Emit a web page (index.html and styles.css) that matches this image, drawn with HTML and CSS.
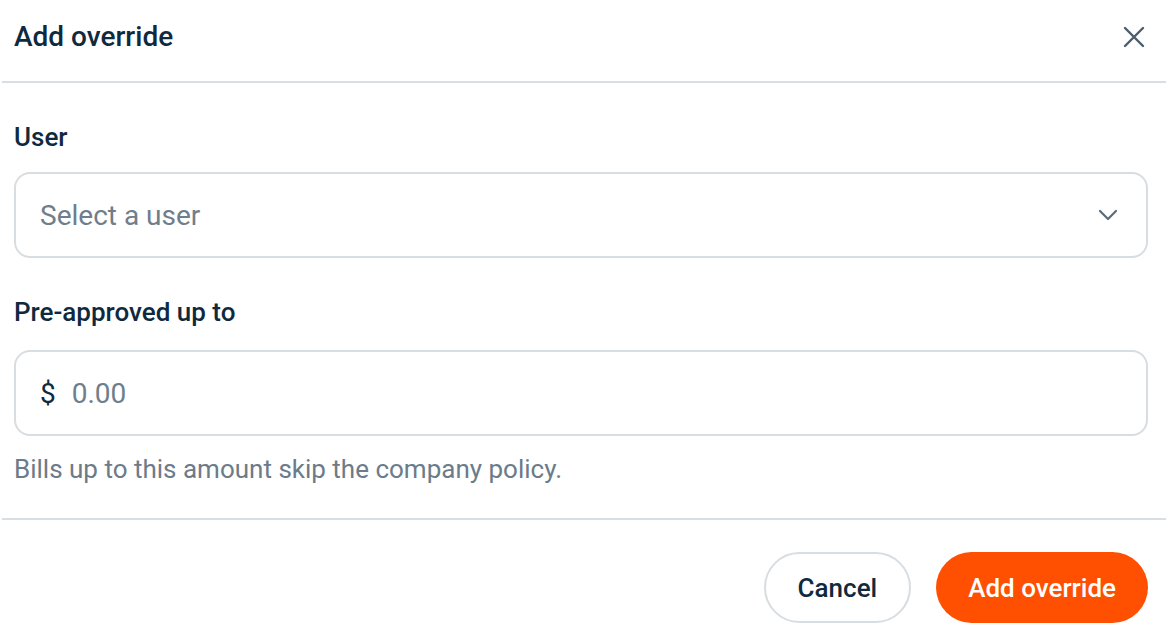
FILE: index.html
```html
<!DOCTYPE html>
<html lang="en">
<head>
<meta charset="utf-8">
<title>Add override</title>
<link rel="stylesheet" href="styles.css">
</head>
<body>
<div class="dialog">
  <header class="dialog-header">
    <h1 class="dialog-title">Add override</h1>
    <button class="close-btn" aria-label="Close">
      <svg width="22" height="22" viewBox="0 0 22 22"><path d="M2 2 L20 20 M20 2 L2 20" stroke="#4b5d6d" stroke-width="2.4" stroke-linecap="round" fill="none"/></svg>
    </button>
  </header>
  <section class="dialog-body">
    <div class="field">
      <label class="field-label">User</label>
      <div class="control select">
        <span class="placeholder">Select a user</span>
        <svg class="chevron" width="20" height="12" viewBox="0 0 20 12"><path d="M2 2 L10 10 L18 2" stroke="#5b6b7a" stroke-width="2.2" stroke-linecap="round" stroke-linejoin="round" fill="none"/></svg>
      </div>
    </div>
    <div class="field">
      <label class="field-label field-label-wide">Pre-approved up to</label>
      <div class="control money">
        <span class="currency">$</span>
        <span class="placeholder">0.00</span>
      </div>
      <p class="help">Bills up to this amount skip the company policy.</p>
    </div>
  </section>
  <footer class="dialog-footer">
    <button class="btn btn-secondary">Cancel</button>
    <button class="btn btn-primary">Add override</button>
  </footer>
</div>
</body>
</html>
```

FILE: styles.css
```css
* { box-sizing: border-box; }
html, body {
  margin: 0;
  padding: 0;
  background: #ffffff;
}
body {
  font-family: Roboto, "Noto Sans", "Liberation Sans", sans-serif;
  color: #0f2a3e;
}
.dialog {
  margin: 0 2px;
  width: 1164px;
}
.dialog-header {
  height: 83px;
  display: flex;
  align-items: center;
  justify-content: space-between;
  padding: 0 21px 8px 12px;
  border-bottom: 2px solid #d9dee2;
}
.dialog-title {
  margin: 0;
  font-size: 28px;
  font-weight: 500;
  line-height: 36px;
  color: #0f2a3e;
}
.close-btn {
  border: 0;
  background: transparent;
  padding: 0;
  width: 22px;
  height: 22px;
  display: flex;
  cursor: pointer;
}
.dialog-body {
  padding: 36px 18px 34px 12px;
  border-bottom: 2px solid #d9dee2;
  display: flex;
  flex-direction: column;
  gap: 36px;
}
.field {
  display: flex;
  flex-direction: column;
}
.field-label {
  font-size: 26px;
  font-weight: 500;
  line-height: 36px;
  margin-bottom: 17px;
  color: #0f2a3e;
}
.field-label-wide {
  margin-bottom: 20px;
}
.control {
  height: 86px;
  border: 2px solid #d8dde1;
  border-radius: 16px;
  display: flex;
  align-items: center;
  padding: 0 28px 0 24px;
  background: #fff;
}
.select {
  justify-content: space-between;
}
.placeholder {
  font-size: 28px;
  color: #6f7e8c;
}
.currency {
  font-size: 28px;
  color: #0f2a3e;
  margin-right: 16px;
}
.help {
  margin: 18px 0 0;
  font-size: 26px;
  line-height: 30px;
  color: #6c7b89;
}
.dialog-footer {
  display: flex;
  justify-content: flex-end;
  gap: 25px;
  padding: 32px 18px 0 12px;
}
.btn {
  height: 71px;
  border-radius: 36px;
  font-family: Roboto, "Noto Sans", "Liberation Sans", sans-serif;
  font-size: 26px;
  font-weight: 500;
  padding: 0 32px;
  cursor: pointer;
}
.btn-secondary {
  background: #fff;
  border: 2px solid #d8dde1;
  color: #0f2a3e;
}
.btn-primary {
  background: #ff4f00;
  border: 0;
  color: #ffffff;
}
```
